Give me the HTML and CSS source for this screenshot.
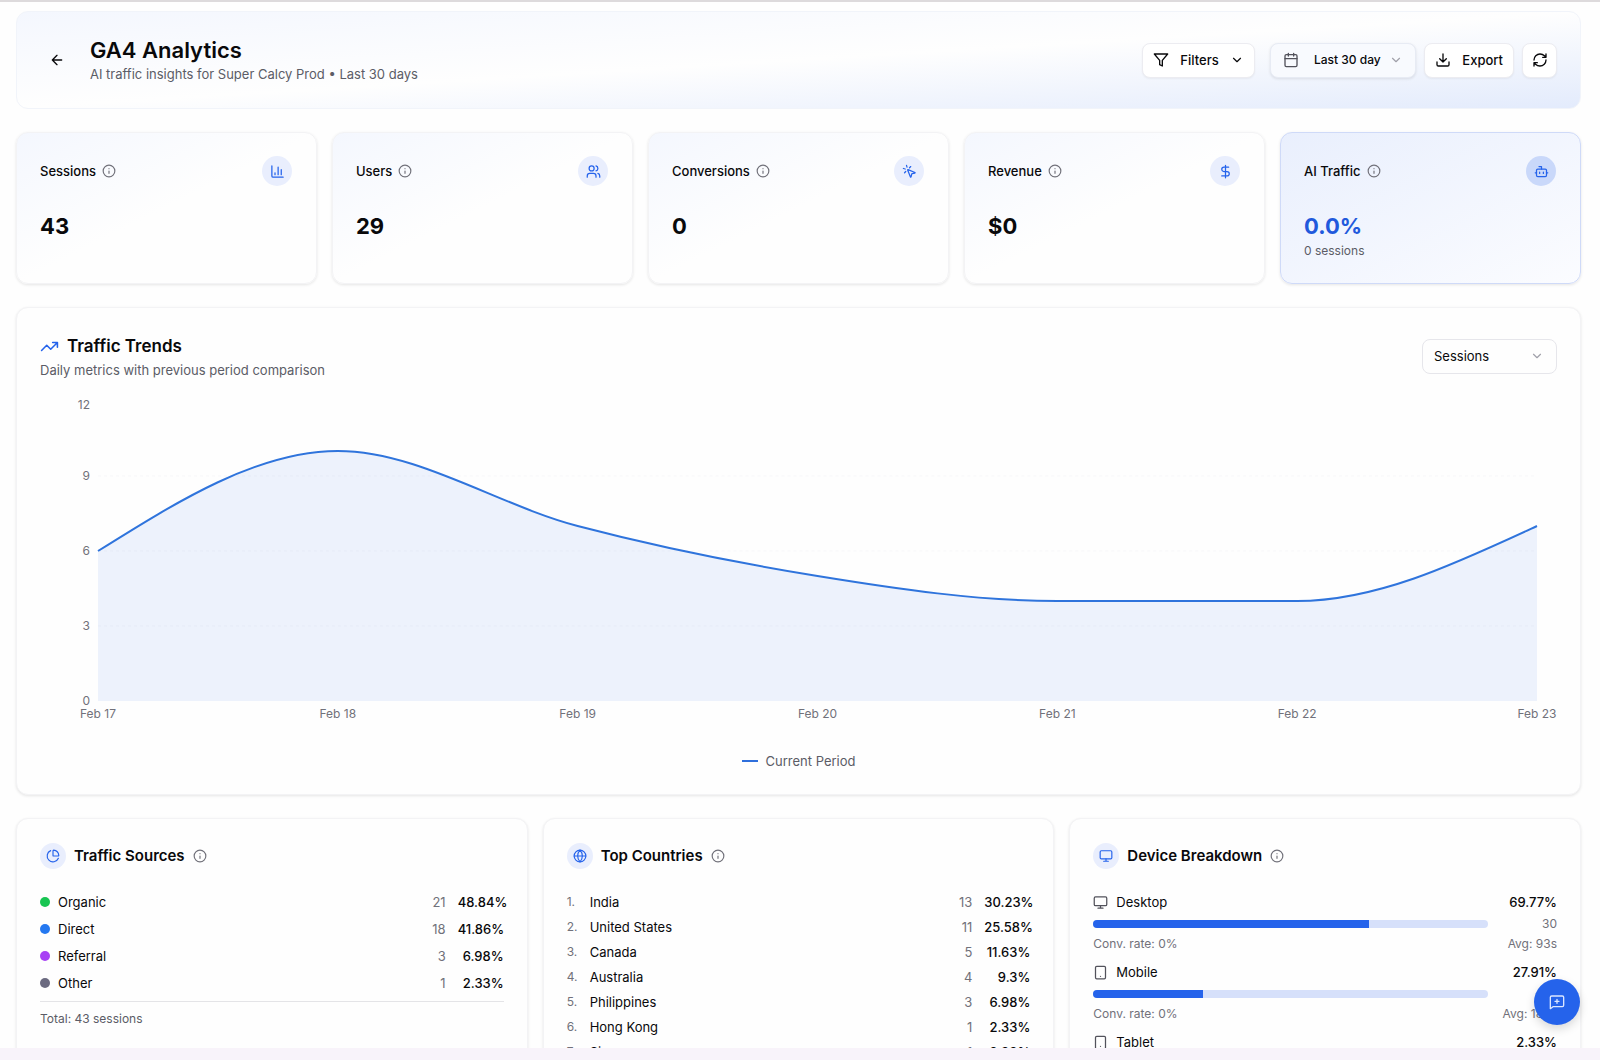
FILE: index.html
```html
<!DOCTYPE html>
<html lang="en">
<head>
<meta charset="utf-8">
<meta name="viewport" content="width=device-width, initial-scale=1">
<title>GA4 Analytics</title>
<link rel="stylesheet" href="styles.css">
</head>
<body>
<svg class="sprite" aria-hidden="true">
  <symbol id="arrow-left" viewBox="0 0 24 24"><path d="m12 19-7-7 7-7M19 12H5"/></symbol>
  <symbol id="filter" viewBox="0 0 24 24"><path d="M22 3H2l8 9.46V19l4 2v-8.54z"/></symbol>
  <symbol id="chevron" viewBox="0 0 24 24"><path d="m6 9 6 6 6-6"/></symbol>
  <symbol id="calendar" viewBox="0 0 24 24"><path d="M8 2v4M16 2v4M3 10h18"/><rect x="3" y="4" width="18" height="18" rx="2"/></symbol>
  <symbol id="download" viewBox="0 0 24 24"><path d="M21 15v4a2 2 0 0 1-2 2H5a2 2 0 0 1-2-2v-4M7 10l5 5 5-5M12 15V3"/></symbol>
  <symbol id="refresh" viewBox="0 0 24 24"><path d="M3 12a9 9 0 0 1 9-9 9.750 9.750 0 0 1 6.740 2.740L21 8M21 3v5h-5M21 12a9 9 0 0 1-9 9 9.750 9.750 0 0 1-6.740-2.740L3 16M8 16H3v5"/></symbol>
  <symbol id="info" viewBox="0 0 24 24"><circle cx="12" cy="12" r="10"/><path d="M12 16v-4M12 8h.01"/></symbol>
  <symbol id="bars" viewBox="0 0 24 24"><path d="M3 3v16a2 2 0 0 0 2 2h16M18 17V9M13 17V5M8 17v-3"/></symbol>
  <symbol id="users" viewBox="0 0 24 24"><path d="M16 21v-2a4 4 0 0 0-4-4H6a4 4 0 0 0-4 4v2M22 21v-2a4 4 0 0 0-3-3.870M16 3.130a4 4 0 0 1 0 7.750"/><circle cx="9" cy="7" r="4"/></symbol>
  <symbol id="click" viewBox="0 0 24 24"><path d="M14 4.100 12 6M5.100 8l-2.900-.8M6 12l-1.900 2M7.200 2.200 8 5.100M9.037 9.690a.498.498 0 0 1 .653-.653l11 4.500a.5.5 0 0 1-.074.949l-4.349 1.041a1 1 0 0 0-.740.739l-1.040 4.350a.5.5 0 0 1-.950.074z"/></symbol>
  <symbol id="dollar" viewBox="0 0 24 24"><path d="M12 2v20M17 5H9.500a3.500 3.500 0 0 0 0 7h5a3.500 3.500 0 0 1 0 7H6"/></symbol>
  <symbol id="bot" viewBox="0 0 24 24"><path d="M12 8V4H8M2 14h2M20 14h2M15 13v2M9 13v2"/><rect x="4" y="8" width="16" height="12" rx="2"/></symbol>
  <symbol id="trend" viewBox="0 0 24 24"><path d="m22 7-8.500 8.500-5-5L2 17M16 7h6v6"/></symbol>
  <symbol id="pie" viewBox="0 0 24 24"><path d="M21 12c.552 0 1.005-.449.950-.998a10 10 0 0 0-8.953-8.951c-.550-.055-.998.398-.998.950v8a1 1 0 0 0 1 1zM21.210 15.890A10 10 0 1 1 8 2.830"/></symbol>
  <symbol id="globe" viewBox="0 0 24 24"><circle cx="12" cy="12" r="10"/><path d="M12 2a14.500 14.500 0 0 0 0 20 14.500 14.500 0 0 0 0-20M2 12h20"/></symbol>
  <symbol id="monitor" viewBox="0 0 24 24"><rect x="2" y="3" width="20" height="14" rx="2"/><path d="M8 21h8M12 17v4"/></symbol>
  <symbol id="phone" viewBox="0 0 24 24"><rect x="4" y="2" width="16" height="20" rx="2"/><path d="M12 18h.01"/></symbol>
  <symbol id="tablet" viewBox="0 0 24 24"><rect x="4" y="2" width="16" height="20" rx="2"/><path d="M12 18h.01"/></symbol>
  <symbol id="message" viewBox="0 0 24 24"><path d="M22 17a2 2 0 0 1-2 2H6l-4 3V5a2 2 0 0 1 2-2h16a2 2 0 0 1 2 2zM12 8v6M9 11h6"/></symbol>
</svg>

<main class="page">
  <header class="hero">
    <button class="back" type="button" aria-label="Back"><svg class="icon"><use href="#arrow-left"/></svg></button>
    <div class="hero-text">
      <h1>GA4 Analytics</h1>
      <p>AI traffic insights for Super Calcy Prod • Last 30 days</p>
    </div>
    <div class="actions">
      <button class="btn btn-filters" type="button"><svg class="icon"><use href="#filter"/></svg>Filters<svg class="icon small"><use href="#chevron"/></svg></button>
      <div class="picker picker-date">
        <svg class="icon lead"><use href="#calendar"/></svg>
        <select aria-label="Date range"><option>Last 30 day</option></select>
        <svg class="icon small tail"><use href="#chevron"/></svg>
      </div>
      <button class="btn btn-export" type="button"><svg class="icon"><use href="#download"/></svg>Export</button>
      <button class="btn btn-square" type="button" aria-label="Refresh"><svg class="icon"><use href="#refresh"/></svg></button>
    </div>
  </header>

  <section class="kpis">
    <article class="card kpi">
      <div class="kpi-head"><h2>Sessions</h2><svg class="icon info"><use href="#info"/></svg><span class="badge"><svg class="icon"><use href="#bars"/></svg></span></div>
      <p class="value">43</p>
    </article>
    <article class="card kpi">
      <div class="kpi-head"><h2>Users</h2><svg class="icon info"><use href="#info"/></svg><span class="badge"><svg class="icon"><use href="#users"/></svg></span></div>
      <p class="value">29</p>
    </article>
    <article class="card kpi">
      <div class="kpi-head"><h2>Conversions</h2><svg class="icon info"><use href="#info"/></svg><span class="badge"><svg class="icon"><use href="#click"/></svg></span></div>
      <p class="value">0</p>
    </article>
    <article class="card kpi">
      <div class="kpi-head"><h2>Revenue</h2><svg class="icon info"><use href="#info"/></svg><span class="badge"><svg class="icon"><use href="#dollar"/></svg></span></div>
      <p class="value">$0</p>
    </article>
    <article class="card kpi kpi-ai">
      <div class="kpi-head"><h2>AI Traffic</h2><svg class="icon info"><use href="#info"/></svg><span class="badge"><svg class="icon"><use href="#bot"/></svg></span></div>
      <p class="value">0.0%</p>
      <p class="note">0 sessions</p>
    </article>
  </section>

  <section class="card trends">
    <div class="trends-head">
      <div>
        <h2><svg class="icon"><use href="#trend"/></svg>Traffic Trends</h2>
        <p>Daily metrics with previous period comparison</p>
      </div>
      <div class="picker picker-metric">
        <select aria-label="Metric"><option>Sessions</option></select>
        <svg class="icon small tail"><use href="#chevron"/></svg>
      </div>
    </div>
    <div class="chart">
      <div class="y-axis"><span>12</span><span>9</span><span>6</span><span>3</span><span>0</span></div>
      <svg class="plot" viewBox="0 0 1440 300" preserveAspectRatio="none" role="img" aria-label="Sessions per day">
        <path class="grid" d="M0 75H1440M0 150H1440M0 225H1440"/>
        <path class="area" d="M0 150C80 100 160 50 240 50C320 50 400 104 480 125C560 146 640 162 720 175C800 188 880 200 960 200H1200C1280 200 1360 162 1440 125V300H0Z"/>
        <path class="line" d="M0 150C80 100 160 50 240 50C320 50 400 104 480 125C560 146 640 162 720 175C800 188 880 200 960 200H1200C1280 200 1360 162 1440 125"/>
      </svg>
      <div class="x-axis"><span>Feb 17</span><span>Feb 18</span><span>Feb 19</span><span>Feb 20</span><span>Feb 21</span><span>Feb 22</span><span>Feb 23</span></div>
    </div>
    <p class="legend"><span class="swatch"></span>Current Period</p>
  </section>

  <section class="panels">
    <article class="card panel">
      <div class="panel-head"><span class="badge"><svg class="icon"><use href="#pie"/></svg></span><h2>Traffic Sources</h2><svg class="icon info"><use href="#info"/></svg></div>
      <ul class="rows sources">
        <li><span class="dot organic"></span><span class="name">Organic</span><span class="count">21</span><span class="share">48.84%</span></li>
        <li><span class="dot direct"></span><span class="name">Direct</span><span class="count">18</span><span class="share">41.86%</span></li>
        <li><span class="dot referral"></span><span class="name">Referral</span><span class="count">3</span><span class="share">6.98%</span></li>
        <li><span class="dot other"></span><span class="name">Other</span><span class="count">1</span><span class="share">2.33%</span></li>
      </ul>
      <p class="total">Total: 43 sessions</p>
    </article>

    <article class="card panel">
      <div class="panel-head"><span class="badge"><svg class="icon"><use href="#globe"/></svg></span><h2>Top Countries</h2><svg class="icon info"><use href="#info"/></svg></div>
      <ol class="rows countries">
        <li><span class="rank">1.</span><span class="name">India</span><span class="count">13</span><span class="share">30.23%</span></li>
        <li><span class="rank">2.</span><span class="name">United States</span><span class="count">11</span><span class="share">25.58%</span></li>
        <li><span class="rank">3.</span><span class="name">Canada</span><span class="count">5</span><span class="share">11.63%</span></li>
        <li><span class="rank">4.</span><span class="name">Australia</span><span class="count">4</span><span class="share">9.3%</span></li>
        <li><span class="rank">5.</span><span class="name">Philippines</span><span class="count">3</span><span class="share">6.98%</span></li>
        <li><span class="rank">6.</span><span class="name">Hong Kong</span><span class="count">1</span><span class="share">2.33%</span></li>
        <li><span class="rank">7.</span><span class="name">Singapore</span><span class="count">1</span><span class="share">2.33%</span></li>
      </ol>
    </article>

    <article class="card panel">
      <div class="panel-head"><span class="badge"><svg class="icon"><use href="#monitor"/></svg></span><h2>Device Breakdown</h2><svg class="icon info"><use href="#info"/></svg></div>
      <ul class="devices">
        <li>
          <div class="device-line"><svg class="icon"><use href="#monitor"/></svg><span class="name">Desktop</span><span class="percent">69.77%</span></div>
          <div class="device-bar"><span class="track"><span class="fill" style="width:69.77%"></span></span><span class="device-count">30</span></div>
          <div class="device-meta"><span>Conv. rate: 0%</span><span>Avg: 93s</span></div>
        </li>
        <li>
          <div class="device-line"><svg class="icon"><use href="#phone"/></svg><span class="name">Mobile</span><span class="percent">27.91%</span></div>
          <div class="device-bar"><span class="track"><span class="fill" style="width:27.91%"></span></span><span class="device-count">12</span></div>
          <div class="device-meta"><span>Conv. rate: 0%</span><span>Avg: 180s</span></div>
        </li>
        <li>
          <div class="device-line"><svg class="icon"><use href="#tablet"/></svg><span class="name">Tablet</span><span class="percent">2.33%</span></div>
        </li>
      </ul>
    </article>
  </section>
</main>
<div class="strip"></div>
<button class="fab" type="button" aria-label="Open chat"><svg class="icon"><use href="#message"/></svg></button>
</body>
</html>
```
FILE: styles.css
```css
* { box-sizing: border-box; }

body {
  margin: 0;
  height: 100vh;
  display: flex;
  flex-direction: column;
  border-top: 2px solid #dddadc;
  background: #fefefe;
  color: #09090b;
  font: 13px/20px Inter, "Liberation Sans", sans-serif;
}

h1, h2, p, ul, ol { margin: 0; padding: 0; }
ul, ol { list-style: none; }
button, select { font: inherit; color: inherit; }

.sprite { display: none; }

.icon {
  width: 16px;
  height: 16px;
  flex: none;
  fill: none;
  stroke: currentColor;
  stroke-width: 2;
  stroke-linecap: round;
  stroke-linejoin: round;
}
.icon.small { width: 14px; height: 14px; }
.icon.info { width: 14px; height: 14px; color: #71717a; }

.page {
  flex: 1;
  min-height: 0;
  overflow-y: auto;
  scrollbar-width: none;
  padding: 9px 19px 24px 16px;
  display: flex;
  flex-direction: column;
  gap: 23px;
}
.page > * { flex: none; }

.hero {
  display: flex;
  align-items: center;
  min-height: 98px;
  padding: 0 23px;
  border: 1px solid #f1f4fa;
  border-radius: 12px;
  background: linear-gradient(to bottom right, #f4f7fe 0%, #fefefe 50%, #e3ebfc 100%);
}
.back {
  display: grid;
  place-items: center;
  width: 34px;
  height: 34px;
  padding: 0;
  border: 0;
  background: none;
}
.hero-text { margin-left: 16px; color: #5b5c66; }
.hero-text h1 {
  color: #09090b;
  font-size: 22px;
  font-weight: 600;
  line-height: 28px;
}

.actions { margin-left: auto; display: flex; gap: 8px; }
.btn {
  display: flex;
  align-items: center;
  height: 35px;
  padding: 0 10px;
  border: 1px solid #ececf1;
  border-radius: 8px;
  background: #fff;
  font-weight: 500;
  box-shadow: 0 1px 2px rgba(0, 0, 0, .05);
}
.btn-filters { width: 113px; margin-right: 7px; justify-content: space-between; }
.btn-export { width: 90px; justify-content: space-between; }
.btn-square { width: 35px; padding: 0; justify-content: center; }

.picker { display: grid; align-items: center; height: 35px; }
.picker > * { grid-area: 1 / 1; }
.picker select {
  width: 100%;
  height: 35px;
  appearance: none;
  border: 1px solid #e6e6eb;
  border-radius: 8px;
  background: #fefefe;
  padding: 0 11px;
}
.picker .icon { z-index: 1; pointer-events: none; }
.picker .lead { margin-left: 13px; color: #52525b; }
.picker .tail { justify-self: end; margin-right: 13px; color: #a1a1aa; }
.picker-date { width: 146px; }
.picker-date select {
  padding: 0 30px 0 43px;
  background: #f8fafe;
  border-color: #e7ebf4;
  font-size: 12px;
  font-weight: 500;
  box-shadow: 0 1px 3px rgba(0, 0, 0, .1);
}
.picker-metric { width: 135px; }

.card {
  border: 1px solid #f3f3f5;
  border-radius: 12px;
  background: #fefefe;
  box-shadow: 0 1px 3px rgba(0, 0, 0, .1);
}

.badge {
  display: grid;
  place-items: center;
  width: 30px;
  height: 30px;
  border-radius: 50%;
  background: #e9eefd;
  color: #2563eb;
}
.badge .icon { width: 15px; height: 15px; }

.kpis { display: grid; grid-template-columns: repeat(5, 1fr); gap: 15px; }
.kpi {
  min-height: 150px;
  padding: 23px 24px 23px 23px;
  background: linear-gradient(to bottom right, #f4f7fe, #fefefe 50%);
}
.kpi-head { display: flex; align-items: center; gap: 6px; }
.kpi-head h2 { font-size: 13px; font-weight: 500; }
.kpi-head .badge { margin-left: auto; }
.value { margin-top: 24px; font-size: 22px; font-weight: 700; line-height: 32px; }
.note { font-size: 12px; line-height: 18px; color: #5b5c66; }
.kpi-ai {
  border-color: #cfdaf8;
  background: linear-gradient(to bottom right, #e9effd, #fbfcff);
}
.kpi-ai .badge { background: #c9d8fa; }
.kpi-ai .value { color: #2159dc; }

.trends { padding: 24px 23px 23px; }
.trends-head { display: flex; justify-content: space-between; align-items: center; }
.trends-head h2 {
  display: flex;
  align-items: center;
  gap: 8px;
  font-size: 17px;
  font-weight: 600;
  line-height: 28px;
}
.trends-head h2 .icon { width: 19px; height: 19px; color: #2563eb; }
.trends-head p { color: #5b5c66; }

.chart {
  display: grid;
  grid-template-columns: 50px 1fr;
  column-gap: 8px;
  padding: 21px 20px 0 0;
  color: #71717a;
  font-size: 12px;
  line-height: 14px;
}
.y-axis {
  display: flex;
  flex-direction: column;
  justify-content: space-between;
  margin: -7px 0;
  text-align: right;
}
/* The top label sits just below the upper edge of the plot. */
.y-axis span:first-child { padding-top: 4px; margin-bottom: -4px; }
.plot { width: 100%; height: 300px; display: block; overflow: visible; }
.grid { fill: none; stroke: #f8f8fa; stroke-dasharray: 3 3; }
.area { fill: #2563eb; fill-opacity: .08; }
.line { fill: none; stroke: #2f74dc; stroke-width: 2; vector-effect: non-scaling-stroke; }
.x-axis {
  grid-column: 2;
  display: flex;
  justify-content: space-between;
  margin: 6px -20px 0;
}
.x-axis span { width: 40px; text-align: center; }
.legend {
  display: flex;
  justify-content: center;
  align-items: center;
  gap: 8px;
  margin-top: 30px;
  color: #5b5c66;
}
.swatch { width: 16px; height: 2px; background: #2f6fdc; }

.panels { display: grid; grid-template-columns: repeat(3, 1fr); gap: 15px; }
.panel { padding: 24px 23px; }
.panel-head { display: flex; align-items: center; gap: 8px; }
.panel-head .badge { width: 26px; height: 26px; }
.panel-head .badge .icon { width: 14px; height: 14px; }
.panel-head h2 { font-size: 15px; font-weight: 600; line-height: 24px; }

.rows { margin-top: 23px; }
.rows li { display: flex; align-items: center; }
.dot { width: 10px; height: 10px; border-radius: 50%; margin-right: 8px; }
.organic { background: #18c552; }
.direct { background: #2478f0; }
.referral { background: #a742f4; }
.other { background: #6b6a80; }
.name { flex: 1; }
.count { color: #71717a; }
.share { width: 46px; margin-left: 12px; text-align: right; font-weight: 500; }
.sources { display: grid; gap: 7px; padding-bottom: 8px; border-bottom: 1px solid #e4e4e7; }
.total { margin-top: 7px; font-size: 12px; color: #5b5c66; }
.countries { display: grid; gap: 5px; }
.rank { width: 23px; font-size: 12px; color: #71717a; }

.devices { display: grid; gap: 9px; margin-top: 23px; }
.device-line { display: flex; align-items: center; gap: 8px; }
.device-line .icon { width: 15px; height: 15px; color: #52525b; }
.percent { font-weight: 500; }
.device-bar { display: flex; align-items: center; gap: 8px; height: 23px; }
.track { flex: 1; height: 8px; border-radius: 4px; overflow: hidden; background: #d6e0fa; }
.fill { display: block; height: 100%; background: #2563eb; }
.device-count { width: 61px; text-align: right; font-size: 12px; color: #71717a; }
.device-meta {
  display: flex;
  justify-content: space-between;
  font-size: 12px;
  line-height: 18px;
  color: #71717a;
}

.strip { flex: none; height: 12px; background: #f8f3fa; }

.fab {
  position: fixed;
  right: 20px;
  bottom: 35px;
  display: grid;
  place-items: center;
  width: 46px;
  height: 46px;
  padding: 0;
  border: 0;
  border-radius: 50%;
  background: #2563eb;
  color: #dbe6ff;
  box-shadow: 0 4px 10px rgba(0, 0, 0, .15);
}
```
